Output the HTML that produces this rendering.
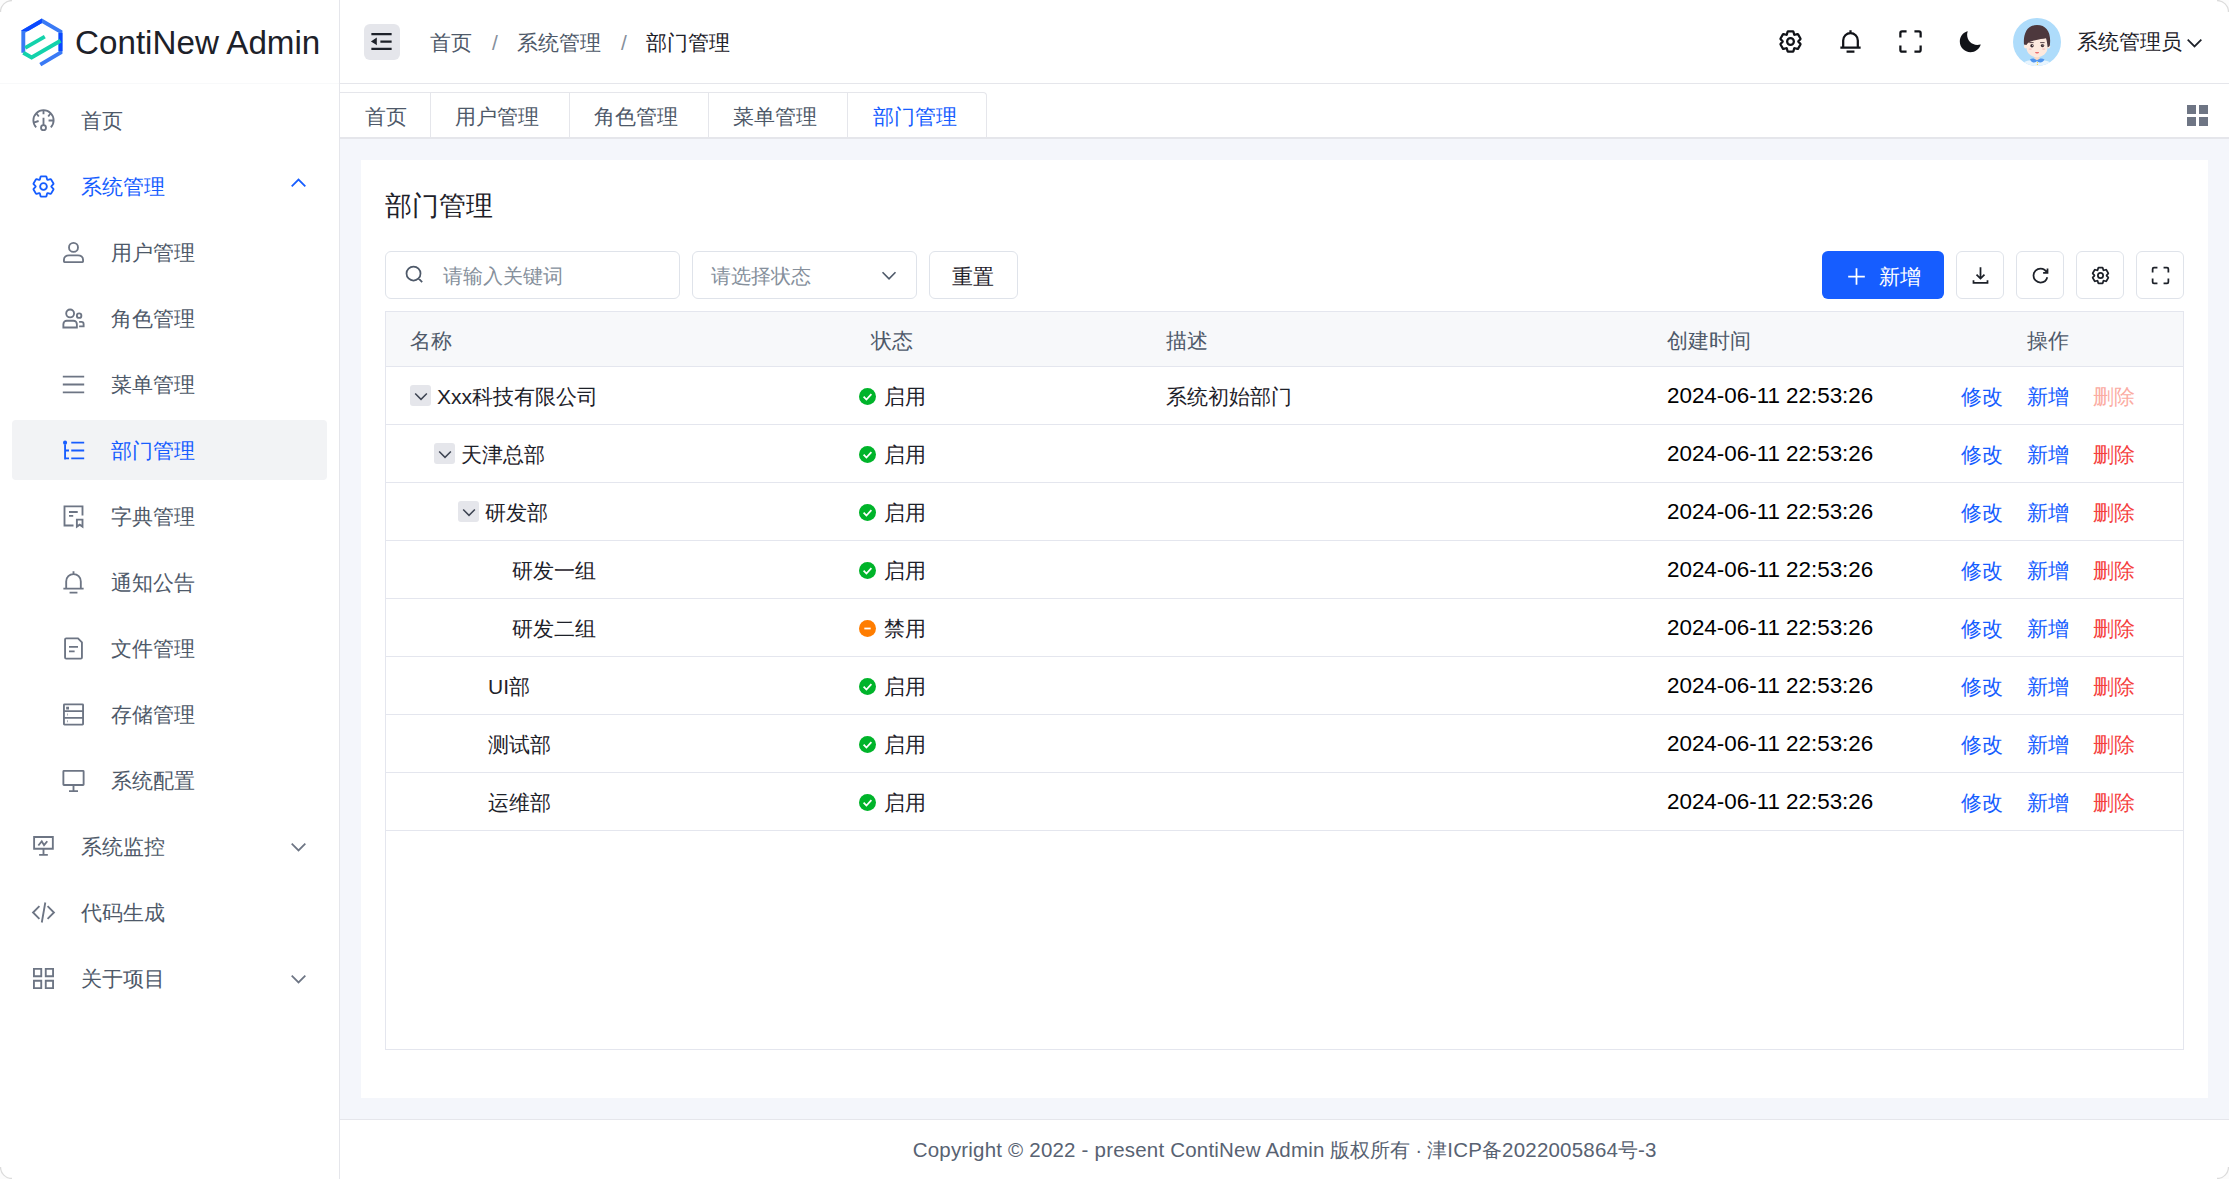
<!DOCTYPE html>
<html><head><meta charset="utf-8"><title>部门管理 - ContiNew Admin</title>
<style>
*{box-sizing:border-box;margin:0;padding:0}
html,body{width:2229px;height:1179px;overflow:hidden;background:#fff}
body{position:relative;font-family:"Liberation Sans",sans-serif;color:#1d2129;font-size:21px}
.a{position:absolute}
.t{position:absolute;white-space:nowrap;line-height:1}
svg.i{position:absolute;fill:none;stroke:currentColor;stroke-linecap:butt;stroke-linejoin:miter}
.menu{color:#4e5969}
.sel{color:#165dff}
</style></head><body>
<div class="a" style="left:340px;top:139px;width:1889px;height:980px;background:#f4f6fb"></div>
<div class="a" style="left:361px;top:160px;width:1847px;height:938px;background:#fff"></div>
<div class="a" style="left:339px;top:0;width:1px;height:1179px;background:#e5e6eb"></div>
<div class="a" style="left:0;top:83px;width:339px;height:1px;background:#f8f9fa"></div>
<div class="a" style="left:340px;top:83px;width:1889px;height:1px;background:#e5e6eb"></div>
<div class="a" style="left:340px;top:1119px;width:1889px;height:1px;background:#e5e6eb"></div>
<svg class="a" style="left:0;top:0" width="80" height="80" viewBox="0 0 80 80" fill="none" stroke-width="3.9" stroke-linecap="butt" stroke-linejoin="miter">
<defs><clipPath id="dk"><path d="M0 0H41.9V31H0ZM57 33H80V51H57Z"/></clipPath></defs>
<path d="M40.3 64.6 60.5 52.7V31.6L41.9 20.7 23.3 31.6V52.7" stroke="#3a7af5"/>
<path d="M40.3 64.6 60.5 52.7V31.6L41.9 20.7 23.3 31.6V52.7" stroke="#0a48ff" clip-path="url(#dk)"/>
<path d="M23.3 52.7 31.6 57.5 60.5 40.8" stroke="#13d2ab"/>
<path d="M25.2 47.9 44.8 36.6" stroke="#13d2ab"/>
</svg>
<div class="t" style="left:75px;top:26px;font-size:33.2px;color:#1d2129">ContiNew Admin</div>
<div class="a" style="left:12px;top:420px;width:315px;height:60px;background:#f2f3f5;border-radius:4px"></div>
<div class="t menu" style="left:81px;top:110px">首页</div>
<div class="t sel" style="left:81px;top:176px">系统管理</div>
<div class="t menu" style="left:111px;top:242px">用户管理</div>
<div class="t menu" style="left:111px;top:308px">角色管理</div>
<div class="t menu" style="left:111px;top:374px">菜单管理</div>
<div class="t sel" style="left:111px;top:440px">部门管理</div>
<div class="t menu" style="left:111px;top:506px">字典管理</div>
<div class="t menu" style="left:111px;top:572px">通知公告</div>
<div class="t menu" style="left:111px;top:638px">文件管理</div>
<div class="t menu" style="left:111px;top:704px">存储管理</div>
<div class="t menu" style="left:111px;top:770px">系统配置</div>
<div class="t menu" style="left:81px;top:836px">系统监控</div>
<div class="t menu" style="left:81px;top:902px">代码生成</div>
<div class="t menu" style="left:81px;top:968px">关于项目</div>
<svg class="i" style="left:30px;top:107px;color:#6d7584" width="27" height="27" viewBox="0 0 48 48" stroke-width="3.3" ><path d="M11 36.1A18 18 0 1 1 37 36.1"/><path d="M24 5.7V13M11.6 11.6l4 5.2M36.4 11.6l-4 5.2M6.5 27.6l8.8-2.7M33 24h8.5M24 19v13"/><circle cx="24" cy="36.7" r="4.4"/></svg>

<svg class="i" style="left:30px;top:173px;color:#165dff" width="27" height="27" viewBox="0 0 48 48" stroke-width="3.3" ><path d="M18.797 6.732A1 1 0 0 1 19.76 6h8.48a1 1 0 0 1 .964.732l1.285 4.628a1 1 0 0 0 1.213.7l4.651-1.2a1 1 0 0 1 1.116.468l4.24 7.344a1 1 0 0 1-.153 1.2L38.193 23.3a1 1 0 0 0 0 1.402l3.364 3.427a1 1 0 0 1 .153 1.2l-4.24 7.344a1 1 0 0 1-1.116.468l-4.65-1.2a1 1 0 0 0-1.214.7l-1.285 4.628a1 1 0 0 1-.964.732h-8.48a1 1 0 0 1-.963-.732L17.51 36.64a1 1 0 0 0-1.213-.7l-4.65 1.2a1 1 0 0 1-1.116-.468l-4.24-7.344a1 1 0 0 1 .153-1.2L9.809 24.7a1 1 0 0 0 0-1.402l-3.364-3.427a1 1 0 0 1-.153-1.2l4.24-7.344a1 1 0 0 1 1.116-.468l4.65 1.2a1 1 0 0 0 1.213-.7l1.286-4.628Z"/><path d="M30 24a6 6 0 1 1-12 0 6 6 0 0 1 12 0Z"/></svg>

<svg class="i" style="left:60px;top:239px;color:#6d7584" width="27" height="27" viewBox="0 0 48 48" stroke-width="3.3" ><path d="M7 37c0-4.97 4.03-8 9-8h16c4.97 0 9 3.03 9 8v3a1 1 0 0 1-1 1H8a1 1 0 0 1-1-1v-3Z"/><circle cx="24" cy="15" r="8"/></svg>

<svg class="i" style="left:60px;top:305px;color:#6d7584" width="27" height="27" viewBox="0 0 48 48" stroke-width="3.3" ><circle cx="18" cy="15" r="7"/><circle cx="34" cy="19" r="4"/><path d="M6 34a6 6 0 0 1 6-6h12a6 6 0 0 1 6 6v6H6v-6ZM34 30h4a4 4 0 0 1 4 4v4h-8"/></svg>

<svg class="i" style="left:60px;top:371px;color:#6d7584" width="27" height="27" viewBox="0 0 48 48" stroke-width="3.3" ><path d="M5 10h38M5 24h38M5 38h38"/></svg>

<svg class="i" style="left:60px;top:437px;color:#165dff" width="27" height="27" viewBox="0 0 48 48" stroke-width="3.3" ><path d="M20 10h23M20 24h23M20 38h23M9 12v28m0-28a2 2 0 1 0 0-4 2 2 0 0 0 0 4Zm0 26h7M9 24h7"/></svg>

<svg class="i" style="left:60px;top:503px;color:#6d7584" width="27" height="27" viewBox="0 0 48 48" stroke-width="3.3" ><path d="M24 40H8V6h32v16"/><path d="M16 16h15.5M16 23h7.5"/><path d="M30 29.5h10V42l-5-3.5-5 3.5V29.5Z"/></svg>

<svg class="i" style="left:60px;top:569px;color:#6d7584" width="27" height="27" viewBox="0 0 48 48" stroke-width="3.3" ><path d="M24 9c7.18 0 13 5.82 13 13v13H11V22c0-7.18 5.82-13 13-13Zm0 0V4M6 35h36m-25 7h14"/></svg>

<svg class="i" style="left:60px;top:635px;color:#6d7584" width="27" height="27" viewBox="0 0 48 48" stroke-width="3.3" ><path d="M16 21h16m-16 8h10m11 13H11a2 2 0 0 1-2-2V8a2 2 0 0 1 2-2h21l7 7v27a2 2 0 0 1-2 2Z"/></svg>

<svg class="i" style="left:60px;top:701px;color:#6d7584" width="27" height="27" viewBox="0 0 48 48" stroke-width="3.3" ><path d="M7 18h34v12H7V18ZM40 6H8a1 1 0 0 0-1 1v11h34V7a1 1 0 0 0-1-1ZM7 30h34v11a1 1 0 0 1-1 1H8a1 1 0 0 1-1-1V30Z"/><path d="M12 11h3v3h-3z" fill="currentColor" stroke-width="2"/><path d="M13 24h1M13 36h1"/></svg>

<svg class="i" style="left:60px;top:767px;color:#6d7584" width="27" height="27" viewBox="0 0 48 48" stroke-width="3.3" ><path d="M24 32v11m-8 0h16M7 7h34a1 1 0 0 1 1 1v23a1 1 0 0 1-1 1H7a1 1 0 0 1-1-1V8a1 1 0 0 1 1-1Z"/></svg>

<svg class="i" style="left:30px;top:833px;color:#6d7584" width="27" height="27" viewBox="0 0 48 48" stroke-width="3.3" ><path d="M7.3 7.2H40.6V28H7.3Z"/><path d="M24 28v10.8M16.2 38.8H31.7"/><path d="M14.8 22.2 20.9 14.9 25 21.7 30.7 14.7"/></svg>

<svg class="i" style="left:30px;top:899px;color:#6d7584" width="27" height="27" viewBox="0 0 48 48" stroke-width="3.3" ><path d="M16.734 12.686 5.42 24l11.314 11.314m14.521-22.628L42.57 24 31.255 35.314M27.2 6.28l-6.251 35.453"/></svg>

<svg class="i" style="left:30px;top:965px;color:#6d7584" width="27" height="27" viewBox="0 0 48 48" stroke-width="3.3" ><path d="M7 7h13v13H7zM28 7h13v13H28zM7 28h13v13H7zM28 28h13v13H28z"/></svg>

<svg class="i" style="left:288px;top:173px;color:#165dff" width="21" height="21" viewBox="0 0 48 48" stroke-width="4" ><path d="M39.6 30.557 24.043 15 8.487 30.557"/></svg>

<svg class="i" style="left:288px;top:836px;color:#6d7584" width="21" height="21" viewBox="0 0 48 48" stroke-width="4" ><path d="M39.6 17.443 24.043 33 8.487 17.443"/></svg>

<svg class="i" style="left:288px;top:968px;color:#6d7584" width="21" height="21" viewBox="0 0 48 48" stroke-width="4" ><path d="M39.6 17.443 24.043 33 8.487 17.443"/></svg>

<div class="a" style="left:364px;top:24px;width:36px;height:36px;background:#e5e6eb;border-radius:6px"></div>
<svg class="i" style="left:368px;top:28px;color:#1d2129" width="27" height="27" viewBox="0 0 48 48" stroke-width="4" ><path d="M42 11H6M42 24H22M42 37H6M13.66 26.912l-4.82-3.118 4.82-3.118v6.236Z"/></svg>

<div class="t" style="left:430px;top:32px;color:#4e5969">首页</div>
<div class="t" style="left:492px;top:32px;color:#86909c">/</div>
<div class="t" style="left:517px;top:32px;color:#4e5969">系统管理</div>
<div class="t" style="left:621px;top:32px;color:#86909c">/</div>
<div class="t" style="left:646px;top:32px;color:#1d2129">部门管理</div>
<svg class="i" style="left:1777px;top:28px;color:#111318" width="27" height="27" viewBox="0 0 48 48" stroke-width="4" ><path d="M18.797 6.732A1 1 0 0 1 19.76 6h8.48a1 1 0 0 1 .964.732l1.285 4.628a1 1 0 0 0 1.213.7l4.651-1.2a1 1 0 0 1 1.116.468l4.24 7.344a1 1 0 0 1-.153 1.2L38.193 23.3a1 1 0 0 0 0 1.402l3.364 3.427a1 1 0 0 1 .153 1.2l-4.24 7.344a1 1 0 0 1-1.116.468l-4.65-1.2a1 1 0 0 0-1.214.7l-1.285 4.628a1 1 0 0 1-.964.732h-8.48a1 1 0 0 1-.963-.732L17.51 36.64a1 1 0 0 0-1.213-.7l-4.65 1.2a1 1 0 0 1-1.116-.468l-4.24-7.344a1 1 0 0 1 .153-1.2L9.809 24.7a1 1 0 0 0 0-1.402l-3.364-3.427a1 1 0 0 1-.153-1.2l4.24-7.344a1 1 0 0 1 1.116-.468l4.65 1.2a1 1 0 0 0 1.213-.7l1.286-4.628Z"/><path d="M30 24a6 6 0 1 1-12 0 6 6 0 0 1 12 0Z"/></svg>

<svg class="i" style="left:1837px;top:28px;color:#111318" width="27" height="27" viewBox="0 0 48 48" stroke-width="4" ><path d="M24 9c7.18 0 13 5.82 13 13v13H11V22c0-7.18 5.82-13 13-13Zm0 0V4M6 35h36m-25 7h14"/></svg>

<svg class="i" style="left:1897px;top:28px;color:#111318" width="27" height="27" viewBox="0 0 48 48" stroke-width="4" ><path d="M42 17V9a3 3 0 0 0-3-3h-8M31 42h8a3 3 0 0 0 3-3v-8M17 6H9a3 3 0 0 0-3 3v8M6 31v8a3 3 0 0 0 3 3h8"/></svg>

<svg class="i" style="left:1957px;top:28px;color:#111318" width="27" height="27" viewBox="0 0 48 48" stroke-width="4" ><path fill="currentColor" stroke="none" d="M42.108 29.769c.124-.387-.258-.736-.645-.613A17.99 17.99 0 0 1 36 30c-9.941 0-18-8.059-18-18 0-1.904.296-3.74.844-5.463.123-.387-.226-.768-.613-.645C10.558 8.334 5 15.518 5 24c0 10.493 8.507 19 19 19 8.482 0 15.666-5.558 18.108-13.231Z"/></svg>

<svg class="a" style="left:2013px;top:18px" width="48" height="48" viewBox="0 0 48 48">
<defs><clipPath id="av"><circle cx="24" cy="24" r="24"/></clipPath></defs>
<g clip-path="url(#av)">
<rect width="48" height="48" fill="#aedcfb"/>
<path d="M8 48c1-4 6-6 16-6s15 2 16 6z" fill="#e9f5fe"/>
<rect x="21.5" y="37" width="5" height="5" fill="#fcd9c4"/>
<path d="M17 41.5c2-1.5 4-1.5 7 .8 3-2.3 5-2.3 7.5-.8-1 2-3 3.2-4.5 3-1.5-.3-2.5-1-3-1.6-.5.6-1.5 1.3-3 1.6-1.5.2-3-1-4-3z" fill="#5096ee"/>
<circle cx="24.4" cy="44.5" r=".6" fill="#f3d34a"/><circle cx="24.4" cy="46.4" r=".6" fill="#f3d34a"/>
<ellipse cx="12.6" cy="28.2" rx="1.6" ry="2.2" fill="#fde9de"/><ellipse cx="35.6" cy="28.2" rx="1.6" ry="2.2" fill="#fde9de"/>
<path d="M13.5 22c0-2 2-4 10.5-4s10.5 2 10.5 4v8c0 5-5 9.2-10.5 9.2S13.5 35 13.5 30z" fill="#fde9de"/>
<path d="M11 26.5C10 16 14 7 24 7s14.5 8 12.8 20.5c-.6 1-1.2 1.5-2.2 1.8-.3-3-.6-6-1.6-9-3 .5-7 1-12 2.2-3.6.9-6 1.6-7.6 4.6-.6-.2-1.6-.4-2.4-.6z" fill="#4d383d"/>
<path d="M16.2 24.6h4.4M27.2 24.6h4.4" stroke="#4d383d" stroke-width=".9"/>
<circle cx="19" cy="27.7" r="1.7" fill="#3c2b30"/><circle cx="29.5" cy="27.6" r="1.7" fill="#3c2b30"/>
<circle cx="19.5" cy="27.2" r=".5" fill="#fff"/><circle cx="30" cy="27.1" r=".5" fill="#fff"/>
<ellipse cx="17.2" cy="31.1" rx="1.7" ry=".9" fill="#f8c9c6"/><ellipse cx="30.7" cy="31.1" rx="1.7" ry=".9" fill="#f8c9c6"/>
<path d="M22 34h4.1c-.3 1-1 1.5-2 1.5s-1.8-.5-2.1-1.5z" fill="#ef7070"/>
</g></svg>
<div class="t" style="left:2077px;top:31px;color:#1d2129">系统管理员</div>
<svg class="i" style="left:2184px;top:32px;color:#1d2129" width="21" height="21" viewBox="0 0 48 48" stroke-width="4" ><path d="M39.6 17.443 24.043 33 8.487 17.443"/></svg>

<div class="a" style="left:340px;top:137px;width:1889px;height:2px;background:#e5e6eb"></div>
<div class="a" style="left:340px;top:92px;width:647px;height:46px;border:1px solid #e5e6eb;border-left:none;border-bottom:none;border-radius:0 4px 0 0"></div>
<div class="a" style="left:430px;top:93px;width:1px;height:44px;background:#e5e6eb"></div>
<div class="a" style="left:569px;top:93px;width:1px;height:44px;background:#e5e6eb"></div>
<div class="a" style="left:708px;top:93px;width:1px;height:44px;background:#e5e6eb"></div>
<div class="a" style="left:847px;top:93px;width:1px;height:44px;background:#e5e6eb"></div>
<div class="t" style="left:365px;top:106px;color:#4e5969">首页</div>
<div class="t" style="left:455px;top:106px;color:#4e5969">用户管理</div>
<div class="t" style="left:594px;top:106px;color:#4e5969">角色管理</div>
<div class="t" style="left:733px;top:106px;color:#4e5969">菜单管理</div>
<div class="t" style="left:873px;top:106px;color:#165dff">部门管理</div>
<div class="a" style="left:2187px;top:105px;width:9px;height:9px;background:#6e7584"></div>
<div class="a" style="left:2199px;top:105px;width:9px;height:9px;background:#6e7584"></div>
<div class="a" style="left:2187px;top:117px;width:9px;height:9px;background:#6e7584"></div>
<div class="a" style="left:2199px;top:117px;width:9px;height:9px;background:#6e7584"></div>
<div class="t" style="left:385px;top:193px;font-size:27px;color:#1d2129">部门管理</div>
<div class="a" style="left:385px;top:251px;width:295px;height:48px;border:1px solid #dfe3ea;border-radius:6px"></div>
<svg class="i" style="left:404px;top:264px;color:#4e5969" width="21" height="21" viewBox="0 0 48 48" stroke-width="4" ><path d="M33.072 33.071c6.248-6.248 6.248-16.379 0-22.627-6.249-6.249-16.38-6.249-22.628 0-6.248 6.248-6.248 16.379 0 22.627 6.248 6.248 16.38 6.248 22.628 0Zm0 0 8.485 8.485"/></svg>

<div class="t" style="left:443px;top:267px;font-size:19.5px;color:#86909c">请输入关键词</div>
<div class="a" style="left:692px;top:251px;width:225px;height:48px;border:1px solid #dfe3ea;border-radius:6px"></div>
<div class="t" style="left:711px;top:267px;font-size:19.5px;color:#86909c">请选择状态</div>
<svg class="i" style="left:879px;top:265px;color:#4e5969" width="20" height="20" viewBox="0 0 48 48" stroke-width="4" ><path d="M39.6 17.443 24.043 33 8.487 17.443"/></svg>

<div class="a" style="left:929px;top:251px;width:89px;height:48px;border:1px solid #dfe3ea;border-radius:6px"></div>
<div class="t" style="left:952px;top:266px;color:#1d2129">重置</div>
<div class="a" style="left:1822px;top:251px;width:122px;height:48px;background:#165dff;border-radius:6px"></div>
<svg class="i" style="left:1846px;top:266px;color:#fff" width="21" height="21" viewBox="0 0 48 48" stroke-width="4" ><path d="M5 24h38M24 5v38"/></svg>

<div class="t" style="left:1879px;top:266px;color:#fff">新增</div>
<div class="a" style="left:1956px;top:251px;width:48px;height:48px;border:1px solid #dfe3ea;border-radius:6px"></div>
<svg class="i" style="left:1969.5px;top:264.5px;color:#1d2129" width="21" height="21" viewBox="0 0 48 48" stroke-width="4" ><path d="m33.072 22.071-9.07 9.071-9.072-9.07M24 5v26m16 4v6H8v-6"/></svg>

<div class="a" style="left:2016px;top:251px;width:48px;height:48px;border:1px solid #dfe3ea;border-radius:6px"></div>
<svg class="i" style="left:2029.5px;top:264.5px;color:#1d2129" width="21" height="21" viewBox="0 0 48 48" stroke-width="4" ><path d="M38.837 18C36.463 12.136 30.715 8 24 8 15.163 8 8 15.163 8 24s7.163 16 16 16c7.455 0 13.72-5.1 15.496-12M40 8v10H30"/></svg>

<div class="a" style="left:2076px;top:251px;width:48px;height:48px;border:1px solid #dfe3ea;border-radius:6px"></div>
<svg class="i" style="left:2089.5px;top:264.5px;color:#1d2129" width="21" height="21" viewBox="0 0 48 48" stroke-width="4" ><path d="M18.797 6.732A1 1 0 0 1 19.76 6h8.48a1 1 0 0 1 .964.732l1.285 4.628a1 1 0 0 0 1.213.7l4.651-1.2a1 1 0 0 1 1.116.468l4.24 7.344a1 1 0 0 1-.153 1.2L38.193 23.3a1 1 0 0 0 0 1.402l3.364 3.427a1 1 0 0 1 .153 1.2l-4.24 7.344a1 1 0 0 1-1.116.468l-4.65-1.2a1 1 0 0 0-1.214.7l-1.285 4.628a1 1 0 0 1-.964.732h-8.48a1 1 0 0 1-.963-.732L17.51 36.64a1 1 0 0 0-1.213-.7l-4.65 1.2a1 1 0 0 1-1.116-.468l-4.24-7.344a1 1 0 0 1 .153-1.2L9.809 24.7a1 1 0 0 0 0-1.402l-3.364-3.427a1 1 0 0 1-.153-1.2l4.24-7.344a1 1 0 0 1 1.116-.468l4.65 1.2a1 1 0 0 0 1.213-.7l1.286-4.628Z"/><path d="M30 24a6 6 0 1 1-12 0 6 6 0 0 1 12 0Z"/></svg>

<div class="a" style="left:2136px;top:251px;width:48px;height:48px;border:1px solid #dfe3ea;border-radius:6px"></div>
<svg class="i" style="left:2149.5px;top:264.5px;color:#1d2129" width="21" height="21" viewBox="0 0 48 48" stroke-width="4" ><path d="M42 17V9a3 3 0 0 0-3-3h-8M31 42h8a3 3 0 0 0 3-3v-8M17 6H9a3 3 0 0 0-3 3v8M6 31v8a3 3 0 0 0 3 3h8"/></svg>

<div class="a" style="left:385px;top:311px;width:1799px;height:739px;border:1px solid #e4e6ee"></div>
<div class="a" style="left:386px;top:312px;width:1797px;height:54px;background:#f7f8fa"></div>
<div class="a" style="left:386px;top:366px;width:1797px;height:1px;background:#e4e6ee"></div>
<div class="t" style="left:410px;top:330px;color:#4e5969">名称</div>
<div class="t" style="left:871px;top:330px;color:#4e5969">状态</div>
<div class="t" style="left:1166px;top:330px;color:#4e5969">描述</div>
<div class="t" style="left:1667px;top:330px;color:#4e5969">创建时间</div>
<div class="t" style="left:2027px;top:330px;color:#4e5969">操作</div>
<div class="a" style="left:386px;top:424px;width:1797px;height:1px;background:#e4e6ee"></div>
<div class="a" style="left:410px;top:385px;width:21px;height:21px;background:#e5e6eb;border-radius:3px"></div>
<svg class="i" style="left:411.5px;top:386.5px;color:#3d4452" width="18" height="18" viewBox="0 0 48 48" stroke-width="4" ><path d="M39.6 17.443 24.043 33 8.487 17.443"/></svg>

<div class="t" style="left:437px;top:386px">Xxx科技有限公司</div>
<svg class="a" style="left:859px;top:388px" width="17" height="17" viewBox="0 0 48 48"><circle cx="24" cy="24" r="24" fill="#00b42a"/><path d="M13 24.5l8 8 14-15" fill="none" stroke="#fff" stroke-width="5"/></svg>
<div class="t" style="left:884px;top:386px">启用</div>
<div class="t" style="left:1166px;top:386px">系统初始部门</div>
<div class="t" style="left:1667px;top:385px;font-size:22.4px;color:#000">2024-06-11 22:53:26</div>
<div class="t" style="left:1961px;top:386px;color:#165dff">修改</div>
<div class="t" style="left:2027px;top:386px;color:#165dff">新增</div>
<div class="t" style="left:2093px;top:386px;color:#fbaca3">删除</div>
<div class="a" style="left:386px;top:482px;width:1797px;height:1px;background:#e4e6ee"></div>
<div class="a" style="left:434px;top:443px;width:21px;height:21px;background:#e5e6eb;border-radius:3px"></div>
<svg class="i" style="left:435.5px;top:444.5px;color:#3d4452" width="18" height="18" viewBox="0 0 48 48" stroke-width="4" ><path d="M39.6 17.443 24.043 33 8.487 17.443"/></svg>

<div class="t" style="left:461px;top:444px">天津总部</div>
<svg class="a" style="left:859px;top:446px" width="17" height="17" viewBox="0 0 48 48"><circle cx="24" cy="24" r="24" fill="#00b42a"/><path d="M13 24.5l8 8 14-15" fill="none" stroke="#fff" stroke-width="5"/></svg>
<div class="t" style="left:884px;top:444px">启用</div>
<div class="t" style="left:1667px;top:443px;font-size:22.4px;color:#000">2024-06-11 22:53:26</div>
<div class="t" style="left:1961px;top:444px;color:#165dff">修改</div>
<div class="t" style="left:2027px;top:444px;color:#165dff">新增</div>
<div class="t" style="left:2093px;top:444px;color:#f53f3f">删除</div>
<div class="a" style="left:386px;top:540px;width:1797px;height:1px;background:#e4e6ee"></div>
<div class="a" style="left:458px;top:501px;width:21px;height:21px;background:#e5e6eb;border-radius:3px"></div>
<svg class="i" style="left:459.5px;top:502.5px;color:#3d4452" width="18" height="18" viewBox="0 0 48 48" stroke-width="4" ><path d="M39.6 17.443 24.043 33 8.487 17.443"/></svg>

<div class="t" style="left:485px;top:502px">研发部</div>
<svg class="a" style="left:859px;top:504px" width="17" height="17" viewBox="0 0 48 48"><circle cx="24" cy="24" r="24" fill="#00b42a"/><path d="M13 24.5l8 8 14-15" fill="none" stroke="#fff" stroke-width="5"/></svg>
<div class="t" style="left:884px;top:502px">启用</div>
<div class="t" style="left:1667px;top:501px;font-size:22.4px;color:#000">2024-06-11 22:53:26</div>
<div class="t" style="left:1961px;top:502px;color:#165dff">修改</div>
<div class="t" style="left:2027px;top:502px;color:#165dff">新增</div>
<div class="t" style="left:2093px;top:502px;color:#f53f3f">删除</div>
<div class="a" style="left:386px;top:598px;width:1797px;height:1px;background:#e4e6ee"></div>
<div class="t" style="left:512px;top:560px">研发一组</div>
<svg class="a" style="left:859px;top:562px" width="17" height="17" viewBox="0 0 48 48"><circle cx="24" cy="24" r="24" fill="#00b42a"/><path d="M13 24.5l8 8 14-15" fill="none" stroke="#fff" stroke-width="5"/></svg>
<div class="t" style="left:884px;top:560px">启用</div>
<div class="t" style="left:1667px;top:559px;font-size:22.4px;color:#000">2024-06-11 22:53:26</div>
<div class="t" style="left:1961px;top:560px;color:#165dff">修改</div>
<div class="t" style="left:2027px;top:560px;color:#165dff">新增</div>
<div class="t" style="left:2093px;top:560px;color:#f53f3f">删除</div>
<div class="a" style="left:386px;top:656px;width:1797px;height:1px;background:#e4e6ee"></div>
<div class="t" style="left:512px;top:618px">研发二组</div>
<svg class="a" style="left:859px;top:620px" width="17" height="17" viewBox="0 0 48 48"><circle cx="24" cy="24" r="24" fill="#ff7d00"/><path d="M15 24h18" fill="none" stroke="#fff" stroke-width="5"/></svg>
<div class="t" style="left:884px;top:618px">禁用</div>
<div class="t" style="left:1667px;top:617px;font-size:22.4px;color:#000">2024-06-11 22:53:26</div>
<div class="t" style="left:1961px;top:618px;color:#165dff">修改</div>
<div class="t" style="left:2027px;top:618px;color:#165dff">新增</div>
<div class="t" style="left:2093px;top:618px;color:#f53f3f">删除</div>
<div class="a" style="left:386px;top:714px;width:1797px;height:1px;background:#e4e6ee"></div>
<div class="t" style="left:488px;top:676px">UI部</div>
<svg class="a" style="left:859px;top:678px" width="17" height="17" viewBox="0 0 48 48"><circle cx="24" cy="24" r="24" fill="#00b42a"/><path d="M13 24.5l8 8 14-15" fill="none" stroke="#fff" stroke-width="5"/></svg>
<div class="t" style="left:884px;top:676px">启用</div>
<div class="t" style="left:1667px;top:675px;font-size:22.4px;color:#000">2024-06-11 22:53:26</div>
<div class="t" style="left:1961px;top:676px;color:#165dff">修改</div>
<div class="t" style="left:2027px;top:676px;color:#165dff">新增</div>
<div class="t" style="left:2093px;top:676px;color:#f53f3f">删除</div>
<div class="a" style="left:386px;top:772px;width:1797px;height:1px;background:#e4e6ee"></div>
<div class="t" style="left:488px;top:734px">测试部</div>
<svg class="a" style="left:859px;top:736px" width="17" height="17" viewBox="0 0 48 48"><circle cx="24" cy="24" r="24" fill="#00b42a"/><path d="M13 24.5l8 8 14-15" fill="none" stroke="#fff" stroke-width="5"/></svg>
<div class="t" style="left:884px;top:734px">启用</div>
<div class="t" style="left:1667px;top:733px;font-size:22.4px;color:#000">2024-06-11 22:53:26</div>
<div class="t" style="left:1961px;top:734px;color:#165dff">修改</div>
<div class="t" style="left:2027px;top:734px;color:#165dff">新增</div>
<div class="t" style="left:2093px;top:734px;color:#f53f3f">删除</div>
<div class="a" style="left:386px;top:830px;width:1797px;height:1px;background:#e4e6ee"></div>
<div class="t" style="left:488px;top:792px">运维部</div>
<svg class="a" style="left:859px;top:794px" width="17" height="17" viewBox="0 0 48 48"><circle cx="24" cy="24" r="24" fill="#00b42a"/><path d="M13 24.5l8 8 14-15" fill="none" stroke="#fff" stroke-width="5"/></svg>
<div class="t" style="left:884px;top:792px">启用</div>
<div class="t" style="left:1667px;top:791px;font-size:22.4px;color:#000">2024-06-11 22:53:26</div>
<div class="t" style="left:1961px;top:792px;color:#165dff">修改</div>
<div class="t" style="left:2027px;top:792px;color:#165dff">新增</div>
<div class="t" style="left:2093px;top:792px;color:#f53f3f">删除</div>
<div class="t" style="left:340px;width:1889px;text-align:center;top:1140px;font-size:19.5px;color:#586272"><span style="font-size:20.5px;letter-spacing:0.2px">Copyright © 2022 - present ContiNew Admin</span> 版权所有 · 津<span style="font-size:20.5px;letter-spacing:0.2px">ICP</span>备<span style="font-size:20.5px;letter-spacing:0.2px">2022005864</span>号<span style="font-size:20.5px">-3</span></div>
<svg class="a" style="left:0px;top:0px" width="14" height="14" viewBox="0 0 14 14"><g transform="rotate(0 7 7)"><path d="M0 0H12A12 12 0 0 0 0 12Z" fill="#fcfcfc"/><path d="M12 0.5A11.5 11.5 0 0 0 0.5 12" fill="none" stroke="#dcdcdc" stroke-width="1.3"/></g></svg>
<svg class="a" style="left:2215px;top:0px" width="14" height="14" viewBox="0 0 14 14"><g transform="rotate(90 7 7)"><path d="M0 0H12A12 12 0 0 0 0 12Z" fill="#fcfcfc"/><path d="M12 0.5A11.5 11.5 0 0 0 0.5 12" fill="none" stroke="#dcdcdc" stroke-width="1.3"/></g></svg>
<svg class="a" style="left:2215px;top:1165px" width="14" height="14" viewBox="0 0 14 14"><g transform="rotate(180 7 7)"><path d="M0 0H12A12 12 0 0 0 0 12Z" fill="#fcfcfc"/><path d="M12 0.5A11.5 11.5 0 0 0 0.5 12" fill="none" stroke="#dcdcdc" stroke-width="1.3"/></g></svg>
<svg class="a" style="left:0px;top:1165px" width="14" height="14" viewBox="0 0 14 14"><g transform="rotate(270 7 7)"><path d="M0 0H12A12 12 0 0 0 0 12Z" fill="#fcfcfc"/><path d="M12 0.5A11.5 11.5 0 0 0 0.5 12" fill="none" stroke="#dcdcdc" stroke-width="1.3"/></g></svg>
</body></html>
